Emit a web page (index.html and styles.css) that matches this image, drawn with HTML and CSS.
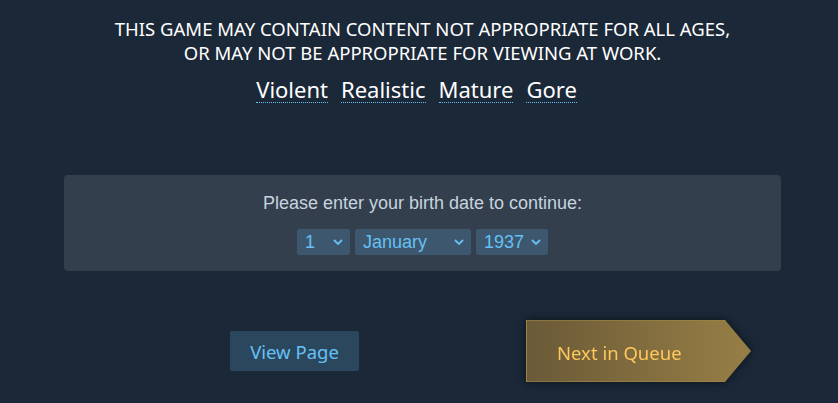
FILE: index.html
```html
<!DOCTYPE html>
<html>
<head>
<meta charset="utf-8">
<link rel="stylesheet" href="styles.css">
</head>
<body>
<div class="page">
  <div class="warning">
    <div class="warning-text">THIS GAME MAY CONTAIN CONTENT NOT APPROPRIATE FOR ALL AGES,<br>OR MAY NOT BE APPROPRIATE FOR VIEWING AT WORK.</div>
    <div class="tags">
      <span class="tag">Violent</span>
      <span class="tag">Realistic</span>
      <span class="tag">Mature</span>
      <span class="tag">Gore</span>
    </div>
  </div>
  <div class="gate">
    <div class="gate-text">Please enter your birth date to continue:</div>
    <div class="selects">
      <div class="select sel-day"><span>1</span><svg class="chev" viewBox="0 0 10 6" width="10" height="6"><path d="M1 1 L5 5 L9 1" fill="none" stroke="#66c0f4" stroke-width="1.8"/></svg></div>
      <div class="select sel-month"><span>January</span><svg class="chev" viewBox="0 0 10 6" width="10" height="6"><path d="M1 1 L5 5 L9 1" fill="none" stroke="#66c0f4" stroke-width="1.8"/></svg></div>
      <div class="select sel-year"><span>1937</span><svg class="chev" viewBox="0 0 10 6" width="10" height="6"><path d="M1 1 L5 5 L9 1" fill="none" stroke="#66c0f4" stroke-width="1.8"/></svg></div>
    </div>
  </div>
  <div class="actions">
    <div class="btn-view">View Page</div>
    <div class="next-wrap"><div class="next">Next in Queue</div></div>
  </div>
</div>
</body>
</html>
```
FILE: styles.css
```css
html, body {
  margin: 0;
  padding: 0;
  background: #1b2838;
}
body {
  width: 838px;
  height: 403px;
  overflow: hidden;
}
.page {
  width: 717px;
  margin-left: 64px;
}
.warning {
  padding-top: 17px;
  text-align: center;
  font-family: "Noto Sans", sans-serif;
  color: #ffffff;
}
.warning-text {
  font-size: 18.5px;
  line-height: 24px;
  white-space: nowrap;
}
.tags {
  margin-top: 11px;
  padding-right: 12px;
  display: flex;
  justify-content: center;
  gap: 13px;
  font-size: 22px;
  line-height: 26px;
}
.tag {
  border-bottom: 1px dotted #66c0f4;
}
.gate {
  margin-top: 72px;
  background: #333f4d;
  border-radius: 4px;
  padding: 17px 0 16px;
  text-align: center;
}
.gate-text {
  font-family: "Liberation Sans", Arial, sans-serif;
  font-size: 18px;
  line-height: 22px;
  color: #c6d4df;
}
.selects {
  margin-top: 15px;
  display: flex;
  justify-content: center;
  gap: 5px;
}
.select {
  height: 26px;
  background: #3d586e;
  border-radius: 2px;
  display: flex;
  align-items: center;
  justify-content: space-between;
  padding: 0 7px 0 8px;
  box-sizing: border-box;
  font-family: "Liberation Sans", Arial, sans-serif;
  font-size: 18px;
  color: #66c0f4;
}
.sel-day { width: 53px; }
.sel-month { width: 116px; }
.sel-year { width: 72px; }
.chev { display: block; }
.actions {
  margin-top: 49px;
  padding-left: 166px;
  display: flex;
  align-items: center;
  gap: 167px;
}
.btn-view {
  width: 129px;
  height: 40px;
  box-sizing: border-box;
  background: #2a475e;
  border-radius: 2px;
  color: #66c0f4;
  font-family: "Noto Sans", sans-serif;
  font-size: 18.5px;
  display: flex;
  align-items: center;
  justify-content: center;
}
.next-wrap {
  filter: drop-shadow(0 0 5px rgba(0, 0, 0, 0.55));
}
.next {
  width: 225px;
  height: 62px;
  box-sizing: border-box;
  clip-path: polygon(0 0, 199px 0, 100% 50%, 199px 100%, 0 100%);
  background: linear-gradient(to right, #6a5a38, #977e45);
  border: 1px solid rgba(160, 135, 70, 0.6);
  color: #ffc85a;
  font-family: "Noto Sans", sans-serif;
  font-size: 18.5px;
  padding-left: 30px;
  display: flex;
  align-items: center;
  padding-top: 2px;
}
```
